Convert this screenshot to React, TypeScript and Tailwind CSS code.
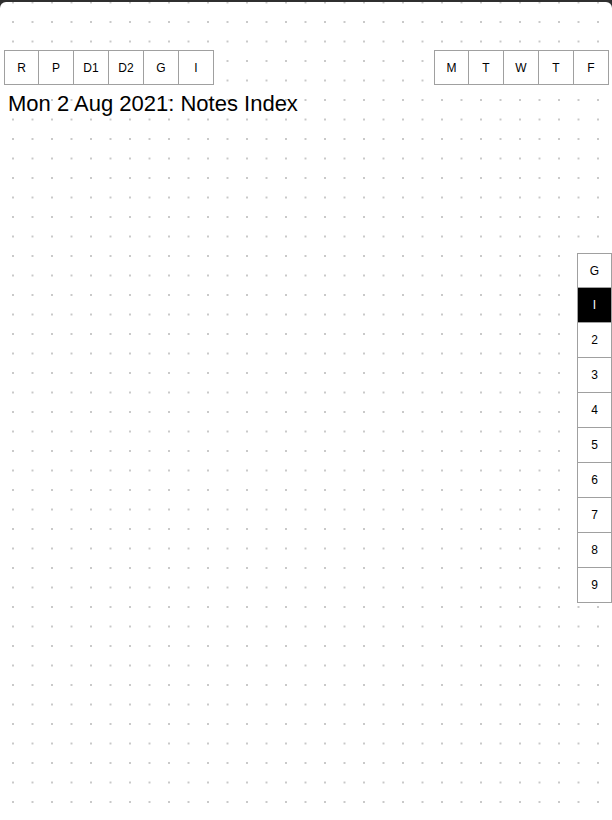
import React from 'react';

const leftTabs = ['R', 'P', 'D1', 'D2', 'G', 'I'];
const dayTabs = ['M', 'T', 'W', 'T', 'F'];
const sideTabs = ['G', 'I', '2', '3', '4', '5', '6', '7', '8', '9'];

const TabBox: React.FC<{ label: string; first?: boolean; active?: boolean }> = ({ label, first, active }) => (
  <div
    className={`w-[35px] h-[35px] flex items-center justify-center text-[12px] border-y border-r border-[#a0a0a0] ${
      first ? 'border-l' : ''
    } ${active ? 'bg-black text-white' : 'bg-white text-black'}`}
  >
    {label}
  </div>
);

const SideTab: React.FC<{ label: string; first?: boolean; active?: boolean }> = ({ label, first, active }) => (
  <div
    className={`w-[35px] h-[35px] flex items-center justify-center text-[12px] border-x border-b border-[#a0a0a0] ${
      first ? 'border-t' : ''
    } ${active ? 'bg-black text-white' : 'bg-white text-black'}`}
  >
    {label}
  </div>
);

export default function App() {
  return (
    <div className="w-[612px] h-[820px] bg-[#2f2f2f] pt-[2px] font-['Liberation_Sans',Arial,sans-serif]">
      <div className="h-[818px] rounded-t-[6px] bg-white bg-[radial-gradient(circle,#c8c8c8_0.8px,transparent_1.1px)] bg-size-[19.5px_19.5px] bg-position-[3.25px_10.25px] flex flex-col">
        {/* top navigation */}
        <div className="flex justify-between pt-[48px] pl-[4px] pr-[3px]">
          <div className="flex">
            {leftTabs.map((t, i) => (
              <TabBox key={t} label={t} first={i === 0} />
            ))}
          </div>
          <div className="flex">
            {dayTabs.map((t, i) => (
              <TabBox key={i} label={t} first={i === 0} />
            ))}
          </div>
        </div>

        <h1 className="mt-[6px] pl-[8px] text-[22px] leading-[26px] text-black">Mon 2 Aug 2021: Notes Index</h1>

        {/* section tabs */}
        <div className="flex justify-end mt-[136px]">
          <div className="flex flex-col">
            {sideTabs.map((t, i) => (
              <SideTab key={t} label={t} first={i === 0} active={t === 'I'} />
            ))}
          </div>
        </div>
      </div>
    </div>
  );
}
